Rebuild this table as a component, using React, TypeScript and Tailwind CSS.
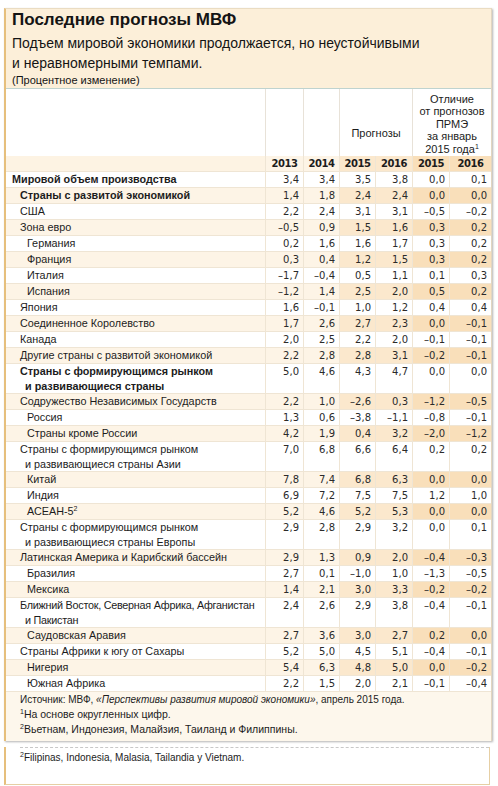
import React from 'react';

// Последние прогнозы МВФ — таблица с чередующимися строками
type Row = {
  label: React.ReactNode;
  label2?: string;
  bold?: boolean;
  tight?: boolean;
  indent: 0 | 1 | 2;
  v: string[];
};

const Sup: React.FC<{ children: React.ReactNode }> = ({ children }) => (
  <sup className="text-[7px] top-[-4px]">{children}</sup>
);

const rows: Row[] = [
  { label: 'Мировой объем производства', bold: true, indent: 0, v: ['3,4', '3,4', '3,5', '3,8', '0,0', '0,1'] },
  { label: 'Страны с развитой экономикой', bold: true, indent: 1, v: ['1,4', '1,8', '2,4', '2,4', '0,0', '0,0'] },
  { label: 'США', indent: 1, v: ['2,2', '2,4', '3,1', '3,1', '–0,5', '–0,2'] },
  { label: 'Зона евро', indent: 1, v: ['–0,5', '0,9', '1,5', '1,6', '0,3', '0,2'] },
  { label: 'Германия', indent: 2, v: ['0,2', '1,6', '1,6', '1,7', '0,3', '0,2'] },
  { label: 'Франция', indent: 2, v: ['0,3', '0,4', '1,2', '1,5', '0,3', '0,2'] },
  { label: 'Италия', indent: 2, v: ['–1,7', '–0,4', '0,5', '1,1', '0,1', '0,3'] },
  { label: 'Испания', indent: 2, v: ['–1,2', '1,4', '2,5', '2,0', '0,5', '0,2'] },
  { label: 'Япония', indent: 1, v: ['1,6', '–0,1', '1,0', '1,2', '0,4', '0,4'] },
  { label: 'Соединенное Королевство', indent: 1, v: ['1,7', '2,6', '2,7', '2,3', '0,0', '–0,1'] },
  { label: 'Канада', indent: 1, v: ['2,0', '2,5', '2,2', '2,0', '–0,1', '–0,1'] },
  { label: 'Другие страны с развитой экономикой', indent: 1, v: ['2,2', '2,8', '2,8', '3,1', '–0,2', '–0,1'] },
  { label: 'Страны с формирующимся рынком', label2: 'и развивающиеся страны', bold: true, indent: 1, v: ['5,0', '4,6', '4,3', '4,7', '0,0', '0,0'] },
  { label: 'Содружество Независимых Государств', indent: 1, v: ['2,2', '1,0', '–2,6', '0,3', '–1,2', '–0,5'] },
  { label: 'Россия', indent: 2, v: ['1,3', '0,6', '–3,8', '–1,1', '–0,8', '–0,1'] },
  { label: 'Страны кроме России', indent: 2, v: ['4,2', '1,9', '0,4', '3,2', '–2,0', '–1,2'] },
  { label: 'Страны с формирующимся рынком', label2: 'и развивающиеся страны Азии', indent: 1, v: ['7,0', '6,8', '6,6', '6,4', '0,2', '0,2'] },
  { label: 'Китай', indent: 2, v: ['7,8', '7,4', '6,8', '6,3', '0,0', '0,0'] },
  { label: 'Индия', indent: 2, v: ['6,9', '7,2', '7,5', '7,5', '1,2', '1,0'] },
  { label: <>АСЕАН-5<Sup>2</Sup></>, indent: 2, v: ['5,2', '4,6', '5,2', '5,3', '0,0', '0,0'] },
  { label: 'Страны с формирующимся рынком', label2: 'и развивающиеся страны Европы', indent: 1, v: ['2,9', '2,8', '2,9', '3,2', '0,0', '0,1'] },
  { label: 'Латинская Америка и Карибский бассейн', indent: 1, v: ['2,9', '1,3', '0,9', '2,0', '–0,4', '–0,3'] },
  { label: 'Бразилия', indent: 2, v: ['2,7', '0,1', '–1,0', '1,0', '–1,3', '–0,5'] },
  { label: 'Мексика', indent: 2, v: ['1,4', '2,1', '3,0', '3,3', '–0,2', '–0,2'] },
  { label: 'Ближний Восток, Северная Африка, Афганистан', label2: 'и Пакистан', tight: true, indent: 1, v: ['2,4', '2,6', '2,9', '3,8', '–0,4', '–0,1'] },
  { label: 'Саудовская Аравия', indent: 2, v: ['2,7', '3,6', '3,0', '2,7', '0,2', '0,0'] },
  { label: 'Страны Африки к югу от Сахары', indent: 1, v: ['5,2', '5,0', '4,5', '5,1', '–0,4', '–0,1'] },
  { label: 'Нигерия', indent: 2, v: ['5,4', '6,3', '4,8', '5,0', '0,0', '–0,2'] },
  { label: 'Южная Африка', indent: 2, v: ['2,2', '1,5', '2,0', '2,1', '–0,1', '–0,4'] },
];

const cols = 'grid grid-cols-[259px_38px_36px_36px_37px_37px_42px]';
const sans = "font-['Liberation_Sans',Arial,sans-serif]";
const num = "font-['DejaVu_Sans',Verdana,sans-serif]";

const indentCls = ['pl-[6px]', 'pl-[14px]', 'pl-[21px]'];

const cellBg = (peach: boolean, j: number) => {
  if (!peach) return 'bg-white';
  if (j < 2) return 'bg-[#fdf4e6]';
  if (j < 4) return 'bg-[#fbe8cd]';
  return 'bg-[#f9dfba]';
};

const DataRow: React.FC<{ r: Row; i: number }> = ({ r, i }) => {
  const peach = i % 2 === 1;
  return (
    <div className={`${cols} ${r.label2 ? 'h-[30px]' : 'h-[16px]'} border-b border-[#efe5d4]`}>
      <div
        className={`${peach ? 'bg-[#fdf4e6]' : 'bg-white'} ${indentCls[r.indent]} text-[10.8px] leading-[15px] text-[#1c1c1c] ${r.bold ? 'font-bold' : ''} ${r.tight ? 'tracking-[-0.25px]' : ''} whitespace-nowrap`}
      >
        <div>{r.label}</div>
        {r.label2 && <div className="pl-[5px] leading-[14px]">{r.label2}</div>}
      </div>
      {r.v.map((v, j) => (
        <div
          key={j}
          className={`${cellBg(peach, j)} border-l border-[#efe5d4] ${num} text-[10px] leading-[15px] text-right pr-[4px] text-[#2a2a2a]`}
        >
          {v}
        </div>
      ))}
    </div>
  );
};

export default function App() {
  return (
    <div className={`w-[498px] h-[786px] bg-white overflow-hidden pt-[8px] ${sans}`}>
      <div className="ml-[4px] w-[488px] border-l-2 border-[#e6bf7c] border-t border-t-[#eadcc2] border-r border-r-[#e2d6c0] shadow-[1px_1px_2px_rgba(0,0,0,0.3)]">
        {/* шапка */}
        <div className="bg-[#fcefd9] h-[80px] border-b border-[#bfd3cf] px-[6px] pt-[1px] text-[#141414]">
          <h1 className="text-[17px] leading-[20px] font-bold">Последние прогнозы МВФ</h1>
          <p className="text-[14px] leading-[20px] mt-[3px]">
            Подъем мировой экономики продолжается, но неустойчивыми
            <br />и неравномерными темпами.
          </p>
          <p className="text-[11px] leading-[14px]">(Процентное изменение)</p>
        </div>

        {/* заголовок таблицы */}
        <div className={`${cols} h-[67px] bg-white text-[11px] text-[#1c1c1c]`}>
          <div />
          <div className="border-l border-[#e8e2d8]" />
          <div className="border-l border-[#e8e2d8]" />
          <div className="col-span-2 border-l border-[#e8e2d8] flex items-end justify-center pb-[15px]">
            Прогнозы
          </div>
          <div className="col-span-2 border-l border-[#e8e2d8] flex flex-col items-center justify-end pb-[1px] leading-[12.5px] text-center">
            <span>Отличие</span>
            <span>от прогнозов</span>
            <span>ПРМЭ</span>
            <span>за январь</span>
            <span>
              2015 года<Sup>1</Sup>
            </span>
          </div>
        </div>

        {/* годы */}
        <div className={`${cols} h-[16px] border-b border-[#efe5d4] ${num} text-[10px] font-bold leading-[15px] tracking-[-0.4px] text-[#1c1c1c]`}>
          <div className="bg-[#fdf3e3]" />
          {['2013', '2014', '2015', '2016', '2015', '2016'].map((y, j) => (
            <div key={j} className={`${cellBg(true, j)} border-l border-[#efe5d4] text-center`}>
              {y}
            </div>
          ))}
        </div>

        {rows.map((r, i) => (
          <DataRow key={i} r={r} i={i} />
        ))}

        {/* источник */}
        <div className="bg-[#fdf7ec] h-[49px] pl-[14px] pt-[1px] text-[#1c1c1c]">
          <p className="text-[10px] leading-[14px]">
            Источник: МВФ, <i>«Перспективы развития мировой экономики»</i>, апрель 2015 года.
          </p>
          <p className="text-[10.5px] leading-[15px]">
            <Sup>1</Sup>На основе округленных цифр.
          </p>
          <p className="text-[10.5px] leading-[14px]">
            <Sup>2</Sup>Вьетнам, Индонезия, Малайзия, Таиланд и Филиппины.
          </p>
        </div>
      </div>

      {/* испанская сноска */}
      <div className="mt-[6px] ml-[4px] w-[486px] h-[38px] border-l-2 border-[#e6bf7c] border-r border-r-[#e6cfa4] border-b border-b-[#e6cfa4] bg-white">
        <div className="ml-[14px] border-t border-dashed border-[#c8c8c8]" />
        <p className="pl-[14px] pt-[3px] text-[10px] leading-[14px] text-[#1c1c1c]">
          <Sup>2</Sup>Filipinas, Indonesia, Malasia, Tailandia y Vietnam.
        </p>
      </div>
    </div>
  );
}
